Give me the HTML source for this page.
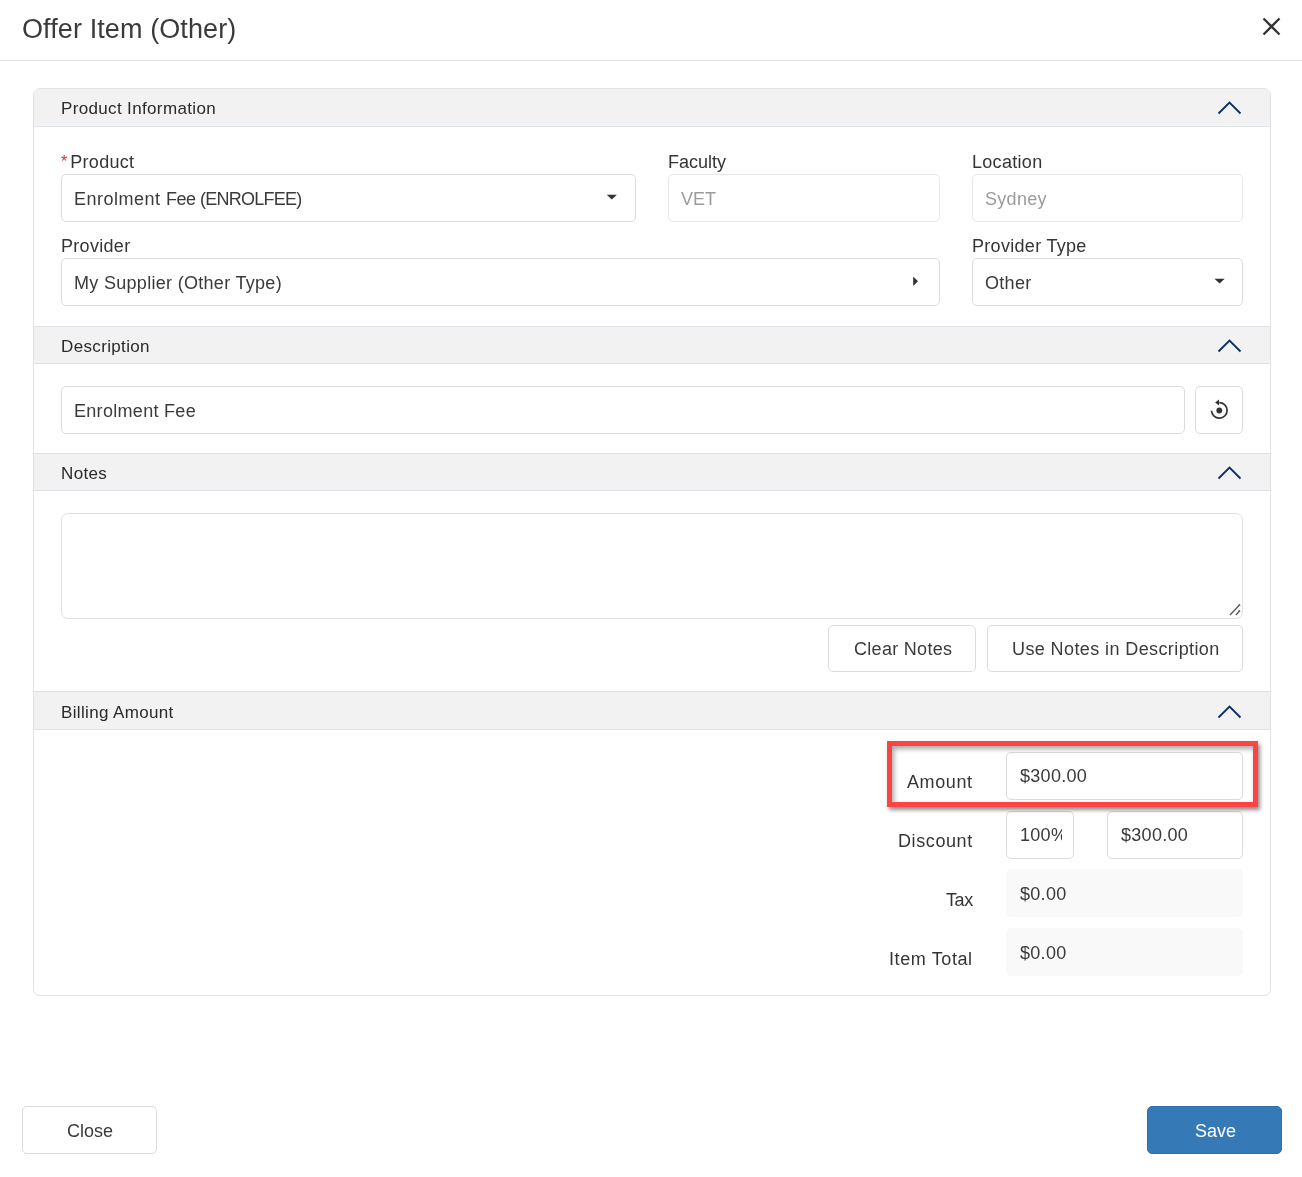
<!DOCTYPE html>
<html>
<head>
<meta charset="utf-8">
<style>
html,body{margin:0;padding:0;background:#fff;}
body{width:1302px;height:1177px;position:relative;overflow:hidden;font-family:"Liberation Sans",sans-serif;color:#333;}
.a{position:absolute;}
.t{position:absolute;white-space:nowrap;line-height:1;will-change:transform;}
.title{left:22px;top:16px;font-size:27px;color:#3a3a3a;letter-spacing:0.1px;}
.hline{left:0;top:60px;width:1302px;height:1px;background:#e1e1e1;}
.panel{left:33px;top:88px;width:1236px;height:906px;border:1px solid #e0e4e9;border-radius:7px;}
.sh{left:34px;width:1236px;height:37px;background:#f2f2f2;border-bottom:1px solid #dde2e8;}
.sht{font-size:17px;color:#2a2a2a;letter-spacing:0.35px;}
.inp{position:absolute;box-sizing:border-box;border:1px solid #dcdcdc;border-radius:5px;background:#fff;height:48px;}
.lbl{font-size:18px;color:#353535;letter-spacing:0.3px;}
.val{font-size:18px;color:#3a3a3a;letter-spacing:0.3px;}
.btn{position:absolute;box-sizing:border-box;border:1px solid #dcdcdc;border-radius:5px;background:#fff;height:47px;}
</style>
</head>
<body>
<div class="t title">Offer Item (Other)</div>
<svg class="a" style="left:1262px;top:17px" width="19" height="19" viewBox="0 0 19 19"><path d="M1.5 1.5L17.5 17.5M17.5 1.5L1.5 17.5" stroke="#333" stroke-width="2.3" fill="none"/></svg>
<div class="a hline"></div>

<div class="a panel"></div>

<!-- Product information header -->
<div class="a sh" style="top:89px;height:37px;border-radius:6px 6px 0 0;"></div>
<div class="t sht" style="left:61px;top:100px;">Product Information</div>
<svg class="a" style="left:1217px;top:100px" width="25" height="15" viewBox="0 0 25 15"><path d="M1.5 13.5L12.5 2.5L23.5 13.5" stroke="#0b2d68" stroke-width="1.8" fill="none"/></svg>

<div class="t lbl" style="left:61px;top:153px;"><span style="color:#e8252a;font-size:16px;position:relative;top:-1px;margin-right:3px;letter-spacing:0">*</span>Product</div>
<div class="inp" style="left:61px;top:174px;width:575px;"></div>
<div class="t val" style="left:74px;top:190px;"><span style="letter-spacing:0.5px">Enrolment </span><span style="letter-spacing:-0.5px">Fee </span><span style="letter-spacing:-0.75px">(ENROLFEE)</span></div>
<svg class="a" style="left:606px;top:194px" width="12" height="7" viewBox="0 0 12 7"><path d="M0.7 0.8H10.9L5.8 5.6Z" fill="#333"/></svg>

<div class="t lbl" style="left:668px;top:153px;letter-spacing:0;">Faculty</div>
<div class="inp" style="left:668px;top:174px;width:272px;border-color:#e8e8e8;"></div>
<div class="t val" style="left:681px;top:190px;color:#9b9b9b;letter-spacing:0;">VET</div>

<div class="t lbl" style="left:972px;top:153px;">Location</div>
<div class="inp" style="left:972px;top:174px;width:271px;border-color:#e8e8e8;"></div>
<div class="t val" style="left:985px;top:190px;color:#9b9b9b;">Sydney</div>

<div class="t lbl" style="left:61px;top:237px;">Provider</div>
<div class="inp" style="left:61px;top:258px;width:879px;"></div>
<div class="t val" style="left:74px;top:274px;">My Supplier (Other Type)</div>
<svg class="a" style="left:911px;top:276px" width="9" height="12" viewBox="0 0 9 12"><path d="M2.2 0.5V10L7 5.25Z" fill="#333"/></svg>

<div class="t lbl" style="left:972px;top:237px;">Provider Type</div>
<div class="inp" style="left:972px;top:258px;width:271px;"></div>
<div class="t val" style="left:985px;top:274px;">Other</div>
<svg class="a" style="left:1214px;top:278px" width="12" height="7" viewBox="0 0 12 7"><path d="M0.5 0.7H10.7L5.6 5.6Z" fill="#333"/></svg>

<!-- Description header -->
<div class="a sh" style="top:326px;height:36px;border-top:1px solid #dde2e8;"></div>
<div class="t sht" style="left:61px;top:338px;">Description</div>
<svg class="a" style="left:1217px;top:338px" width="25" height="15" viewBox="0 0 25 15"><path d="M1.5 13.5L12.5 2.5L23.5 13.5" stroke="#0b2d68" stroke-width="1.8" fill="none"/></svg>

<div class="inp" style="left:61px;top:386px;width:1124px;"></div>
<div class="t val" style="left:74px;top:402px;">Enrolment Fee</div>
<div class="inp" style="left:1195px;top:386px;width:48px;"></div>
<svg class="a" style="left:1195px;top:386px" width="48" height="48" viewBox="0 0 48 48"><path d="M16.5 24.8A7.8 7.8 0 1 0 24.3 16.6" stroke="#333" stroke-width="1.7" fill="none"/><path d="M20.1 16.4L24 13.4V19.4Z" fill="#333"/><circle cx="24.3" cy="24.5" r="2.9" fill="#333"/></svg>

<!-- Notes header -->
<div class="a sh" style="top:453px;height:36px;border-top:1px solid #dde2e8;"></div>
<div class="t sht" style="left:61px;top:465px;">Notes</div>
<svg class="a" style="left:1217px;top:465px" width="25" height="15" viewBox="0 0 25 15"><path d="M1.5 13.5L12.5 2.5L23.5 13.5" stroke="#0b2d68" stroke-width="1.8" fill="none"/></svg>

<div class="a" style="left:61px;top:513px;width:1182px;height:106px;box-sizing:border-box;border:1px solid #dde1e7;border-radius:7px;"></div>
<svg class="a" style="left:1228px;top:602px" width="14" height="15" viewBox="0 0 14 15"><path d="M2 13L11.5 3M8 13L11.5 9" stroke="#555" stroke-width="1.3" fill="none"/><path d="M10.8 2.2L12.2 3.6M10.8 8.2L12.2 9.6" stroke="#555" stroke-width="1.1" fill="none"/></svg>

<div class="btn" style="left:828px;top:625px;width:148px;"></div>
<div class="t val" style="left:854px;top:640px;">Clear Notes</div>
<div class="btn" style="left:987px;top:625px;width:256px;"></div>
<div class="t val" style="left:1012px;top:640px;letter-spacing:0.4px;">Use Notes in Description</div>

<!-- Billing header -->
<div class="a sh" style="top:691px;height:37px;border-top:1px solid #dde2e8;"></div>
<div class="t sht" style="left:61px;top:704px;">Billing Amount</div>
<svg class="a" style="left:1217px;top:704px" width="25" height="15" viewBox="0 0 25 15"><path d="M1.5 13.5L12.5 2.5L23.5 13.5" stroke="#0b2d68" stroke-width="1.8" fill="none"/></svg>

<div class="t lbl" style="right:329px;top:773px;letter-spacing:0.6px;">Amount</div>
<div class="inp" style="left:1006px;top:752px;width:237px;"></div>
<div class="t val" style="left:1020px;top:767px;">$300.00</div>

<div class="t lbl" style="right:329px;top:832px;letter-spacing:0.6px;">Discount</div>
<div class="inp" style="left:1006px;top:811px;width:68px;"></div>
<div class="a" style="left:1020px;top:826px;width:42px;overflow:hidden;"><div class="t val" style="position:static">100%</div></div>
<div class="inp" style="left:1107px;top:811px;width:136px;"></div>
<div class="t val" style="left:1121px;top:826px;">$300.00</div>

<div class="t lbl" style="right:329px;top:891px;letter-spacing:-0.4px;">Tax</div>
<div class="inp" style="left:1006px;top:869px;width:237px;background:#f9f9f9;border-color:#f9f9f9;"></div>
<div class="t val" style="left:1020px;top:885px;">$0.00</div>

<div class="t lbl" style="right:329px;top:950px;letter-spacing:0.6px;">Item Total</div>
<div class="inp" style="left:1006px;top:928px;width:237px;background:#f9f9f9;border-color:#f9f9f9;"></div>
<div class="t val" style="left:1020px;top:944px;">$0.00</div>

<!-- red highlight -->
<div class="a" style="left:887px;top:741px;width:371px;height:66px;box-sizing:border-box;border:5px solid #fd4343;box-shadow:2px 3px 4px rgba(0,0,0,0.45), inset 2px 3px 5px rgba(0,0,0,0.35);"></div>

<!-- footer -->
<div class="btn" style="left:22px;top:1106px;width:135px;height:48px;"></div>
<div class="t val" style="left:67px;top:1122px;letter-spacing:0;">Close</div>
<div class="a" style="left:1147px;top:1106px;width:135px;height:48px;box-sizing:border-box;background:#357ab7;border:1px solid #2f70ad;border-radius:5px;"></div>
<div class="t val" style="left:1195px;top:1122px;color:#fff;letter-spacing:0;">Save</div>
</body>
</html>
